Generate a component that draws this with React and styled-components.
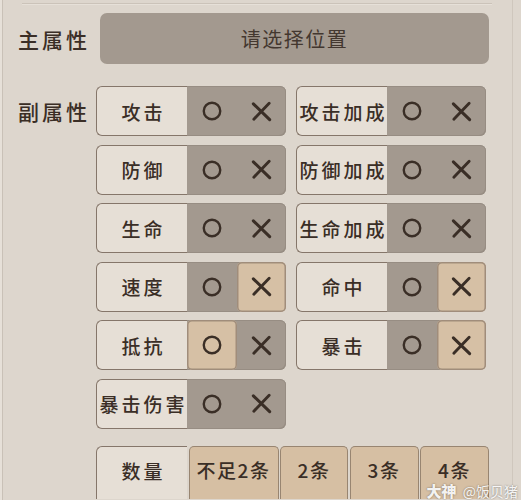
import React from 'react';
import styled, { createGlobalStyle } from 'styled-components';

// DATA
const subStats = [
    [{ name: "攻击" }, { name: "攻击加成" }],
    [{ name: "防御" }, { name: "防御加成" }],
    [{ name: "生命" }, { name: "生命加成" }],
    [{ name: "速度", pick: "x" }, { name: "命中", pick: "x" }],
    [{ name: "抵抗", pick: "o" }, { name: "暴击", pick: "x" }],
    [{ name: "暴击伤害" }],
];

const counts = [
    { text: "不足2条", width: 90 },
    { text: "2条", width: 68 },
    { text: "3条", width: 69 },
    { text: "4条", width: 69 },
];

const CircleIcon = () => (
    <svg width="22" height="22" viewBox="0 0 24 24">
        <circle cx="12" cy="12" r="9" fill="none" stroke="#3a2e26" strokeWidth="2.6" />
    </svg>
);

const CrossIcon = () => (
    <svg width="23" height="23" viewBox="0 0 24 24">
        <path d="M3.5 4 L20.5 20.5" stroke="#3a2e26" strokeWidth="3.2" strokeLinecap="round" />
        <path d="M20 3.5 L4 20" stroke="#3a2e26" strokeWidth="3" strokeLinecap="round" />
    </svg>
);

export default function App() {
    return (
        <>
            <GlobalStyle />
            <Panel>
                <TopRule />

                {/* MAIN STAT */}
                <MainRow>
                    <SideLabel $width={82}>主属性</SideLabel>
                    <SelectBox>请选择位置</SelectBox>
                </MainRow>

                {/* SUB STATS */}
                <SubRow>
                    <SideLabel $width={78}>副属性</SideLabel>
                    <StatGrid>
                        {subStats.flat().map((stat) => (
                            <Cell key={stat.name}>
                                <CellLabel><span>{stat.name}</span></CellLabel>
                                <Toggles>
                                    <Toggle $active={stat.pick === "o"}><CircleIcon /></Toggle>
                                    <Toggle $active={stat.pick === "x"}><CrossIcon /></Toggle>
                                </Toggles>
                            </Cell>
                        ))}
                    </StatGrid>
                </SubRow>

                {/* COUNT */}
                <CountRow>
                    <CountLabel><span>数量</span></CountLabel>
                    {counts.map((c) => (
                        <CountOption key={c.text} $width={c.width}>{c.text}</CountOption>
                    ))}
                </CountRow>

                <Watermark><b>大神</b> @饭贝猪</Watermark>
            </Panel>
        </>
    )
}

// STYLED COMPONENTS
const GlobalStyle = createGlobalStyle`
* {
    box-sizing: border-box;
}

html, body {
    margin: 0;
    padding: 0;
    background: #ddd6cd;
}

body {
    font-family: "Noto Sans CJK SC", "Noto Sans", sans-serif;
    color: #3a2e26;
}
`

const Panel = styled.div`
    position: relative;
    width: 521px;
    height: 500px;
    overflow: hidden;
    padding-top: 3px;
    background: #ddd6cd;
    border-left: 2px solid #e6e0d8;
    box-shadow: inset 1px 0 0 #c9c1b7, inset -8px 0 0 #ddd6cd, inset -9px 0 0 #cfc7bd;
`

const TopRule = styled.div`
    height: 2px;
    margin: 0 29px 0 20px;
    background: #cbc3b9;
    border-bottom: 1px solid #e6e0d8;
`

const MainRow = styled.div`
    display: flex;
    align-items: center;
    margin-top: 8px;
    padding-left: 16px;
`

const SideLabel = styled.div`
    width: ${(p) => p.$width}px;
    flex-shrink: 0;
    font-size: 21px;
    font-weight: 500;
    letter-spacing: 3px;
    line-height: 50px;
    color: #3a2e26;
`

const SelectBox = styled.div`
    width: 389px;
    height: 51px;
    display: flex;
    align-items: center;
    justify-content: center;
    background: #a3998f;
    border-radius: 7px;
    font-size: 20px;
    letter-spacing: 1.5px;
    color: #43372f;
`

const SubRow = styled.div`
    display: flex;
    align-items: flex-start;
    margin-top: 22px;
    padding-left: 16px;
`

const StatGrid = styled.div`
    display: grid;
    grid-template-columns: 190px 190px;
    grid-auto-rows: 50px;
    column-gap: 10px;
    row-gap: 8.6px;
`

const Cell = styled.div`
    display: flex;
    height: 50px;
`

const CellLabel = styled.div`
    width: 91px;
    flex-shrink: 0;
    display: flex;
    align-items: center;
    justify-content: center;
    background: #e6dfd6;
    border: 1.5px solid #85766a;
    border-right: none;
    border-radius: 6px 0 0 6px;
    font-size: 19px;
    font-weight: 500;
    letter-spacing: 3px;
    white-space: nowrap;

    span {
        margin-right: -3px;
    }
`

const Toggles = styled.div`
    flex: 1;
    display: flex;
    background: #a3998f;
    border-radius: 0 6px 6px 0;
    box-shadow: inset 0 1px 0 #978d83, inset -1px -1px 0 #978d83;
`

const Toggle = styled.div`
    flex: 1;
    display: flex;
    align-items: center;
    justify-content: center;
    border-radius: 5px;
    background: ${(p) => (p.$active ? "#d6c0a5" : "transparent")};
    box-shadow: ${(p) => (p.$active ? "inset 0 0 0 1.5px #a08d7b" : "none")};
`

const CountRow = styled.div`
    display: flex;
    gap: 1.5px;
    margin-top: 17px;
    margin-left: 94px;
    height: 53px;
`

const CountLabel = styled(CellLabel)`
    padding-bottom: 4px;
    border-bottom: none;
    border-radius: 6px 0 0 0;
`

const CountOption = styled.div`
    width: ${(p) => p.$width}px;
    display: flex;
    align-items: center;
    justify-content: center;
    padding-bottom: 5px;
    background: #d6bfa3;
    border: 1.5px solid #988571;
    border-bottom: none;
    border-radius: 5px 5px 0 0;
    font-size: 19px;
    font-weight: 500;
    letter-spacing: 1.5px;
    line-height: 22px;
    color: #3a2e26;
`

const Watermark = styled.div`
    position: absolute;
    right: 3px;
    bottom: 2px;
    font-size: 14px;
    line-height: 14px;
    color: rgba(255, 255, 255, 0.92);
    text-shadow: 0 0 2px rgba(0, 0, 0, 0.45);

    b {
        font-weight: 900;
        font-size: 15px;
        margin-right: 3px;
    }
`
